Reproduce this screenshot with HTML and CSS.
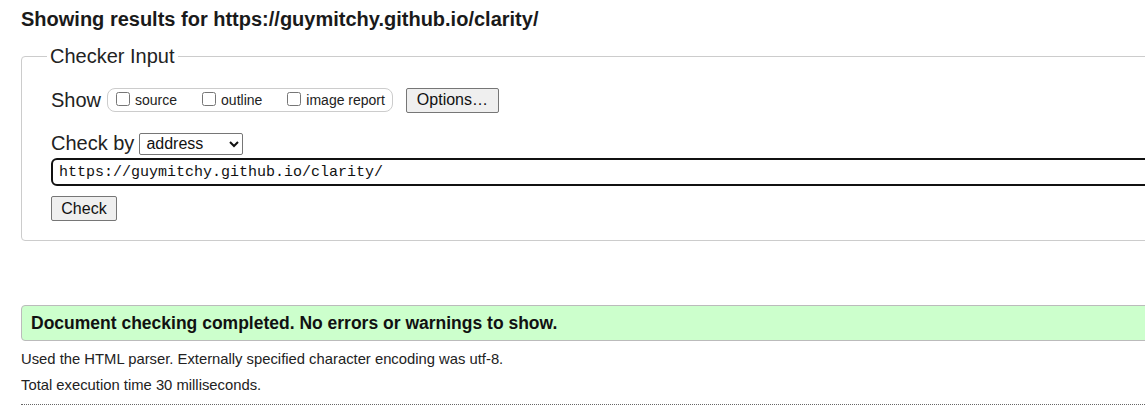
FILE: index.html
```
<!DOCTYPE html>
<html>
<head>
<meta charset="utf-8">
<link rel="stylesheet" href="styles.css">
</head>
<body>
<h2 class="title">Showing results for https://guymitchy.github.io/clarity/</h2>
<form class="checker">
  <fieldset class="input-box">
    <legend class="legend">Checker Input</legend>
    <div class="row show-row">
      <span class="label">Show</span>
      <span class="opts">
        <label class="opt"><input type="checkbox" class="cb"><span>source</span></label>
        <label class="opt"><input type="checkbox" class="cb"><span>outline</span></label>
        <label class="opt"><input type="checkbox" class="cb"><span>image report</span></label>
      </span>
      <button type="button" class="btn">Options…</button>
    </div>
    <div class="row by-row">
      <span class="label">Check by</span>
      <select class="sel"><option>address</option></select>
    </div>
    <div class="url">https://guymitchy.github.io/clarity/</div>
    <button type="button" class="btn check">Check</button>
  </fieldset>
</form>
<div class="success">Document checking completed. No errors or warnings to show.</div>
<p class="details">Used the HTML parser. Externally specified character encoding was utf-8.</p>
<p class="details">Total execution time 30 milliseconds.</p>
<hr class="sep">
</body>
</html>
```
FILE: styles.css
```
html, body {
  margin: 0;
  overflow: hidden;
}
body {
  padding: 0 0 0 21px;
  width: 1200px;
  font-family: "Liberation Sans", Arial, sans-serif;
  color: #111;
  background: #fff;
}
.title {
  font-size: 20px;
  font-weight: bold;
  margin: 8px 0 0 0;
  line-height: 23px;
  color: #1a1a1a;
}
.checker {
  margin-top: 14px;
}
.input-box {
  margin: 0;
  border: 1px solid #ccc;
  border-radius: 4px;
  padding: 19px 0 19px 29px;
  min-width: 0;
}
.legend {
  font-size: 20px;
  padding: 0 3px;
  margin-left: -4px;
  color: #222;
}
.row {
  display: flex;
  align-items: center;
}
.show-row {
  height: 26px;
}
.label {
  font-size: 20px;
  color: #222;
  margin-right: 6px;
}
.opts {
  display: flex;
  align-items: center;
  flex: none;
  border: 1px solid #ccc;
  border-radius: 8px;
  height: 24px;
  padding: 0 7px 0 8px;
  box-sizing: border-box;
  gap: 25px;
}
.opt {
  display: flex;
  align-items: center;
  flex: none;
  white-space: nowrap;
  font-size: 14px;
  color: #222;
}
.cb {
  width: 14px;
  height: 14px;
  margin: 0 5px 2px 0;
}
.btn {
  font-family: "Liberation Sans", Arial, sans-serif;
  font-size: 16px;
  color: #111;
  background: #efefef;
  border: 1px solid #767676;
  border-radius: 2px;
  padding: 1px 8px;
  height: 25px;
}
.show-row .btn {
  margin-left: 13px;
  width: 93px;
  flex: none;
}
.by-row {
  margin-top: 19px;
}
.by-row .label {
  margin-right: 5px;
}
.sel {
  font-family: "Liberation Sans", Arial, sans-serif;
  font-size: 16px;
  width: 104px;
  height: 22px;
  border: 1px solid #767676;
  border-radius: 2px;
  background: #fff;
  color: #111;
  padding: 0 2px;
}
.url {
  margin-top: 3px;
  border: 2px solid #111;
  border-radius: 6px;
  height: 28px;
  box-sizing: border-box;
  width: 1150px;
  font-family: "Liberation Mono", "DejaVu Sans Mono", monospace;
  font-size: 15px;
  line-height: 26px;
  padding-left: 6px;
  color: #111;
}
.check {
  margin-top: 10px;
  width: 66px;
  display: block;
}
.success {
  margin-top: 64px;
  background: #ccffcc;
  border: 1px solid #bbb;
  border-radius: 4px;
  height: 36px;
  box-sizing: border-box;
  padding-left: 9px;
  font-weight: bold;
  font-size: 17.5px;
  line-height: 34px;
  color: #111;
}
.details {
  font-size: 14.8px;
  margin: 9px 0 0 0;
  line-height: 17px;
  color: #222;
}
.details:first-of-type {
  margin-top: 10px;
}
.sep {
  border: 0;
  border-top: 1px dotted #666;
  margin: 10px 0 0 0;
  height: 0;
}
```
